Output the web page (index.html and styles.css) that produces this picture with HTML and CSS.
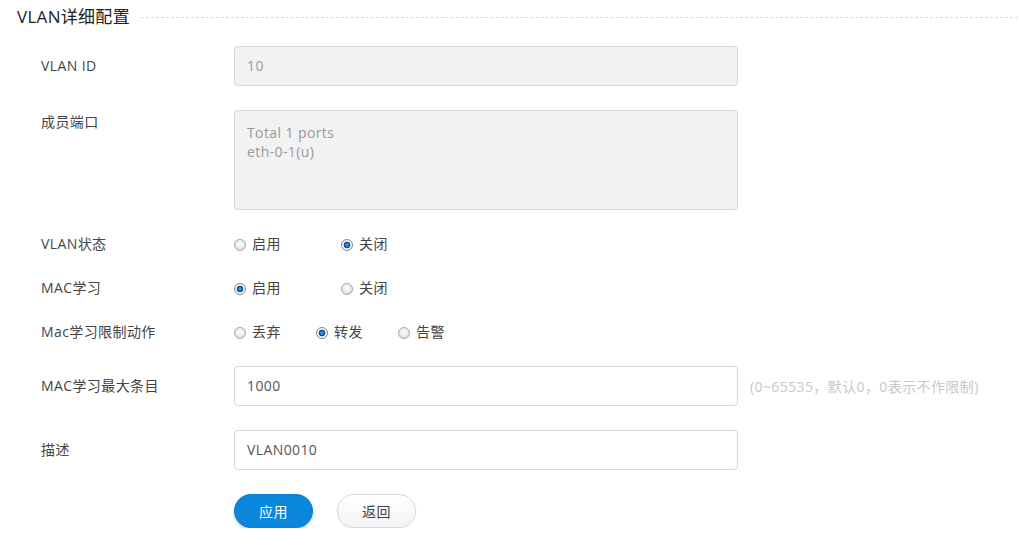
FILE: index.html
```html
<!DOCTYPE html>
<html lang="zh-CN">
<head>
<meta charset="utf-8">
<title>VLAN详细配置</title>
<link rel="stylesheet" href="styles.css">
</head>
<body>
<div class="page">
  <div class="title-bar">
    <span class="title">VLAN详细配置</span>
    <span class="title-line"></span>
  </div>
  <div class="form">
    <div class="row">
      <div class="label">VLAN ID</div>
      <div class="field input disabled">10</div>
    </div>
    <div class="row top">
      <div class="label">成员端口</div>
      <div class="field textarea disabled">Total 1 ports<br>eth-0-1(u)</div>
    </div>
    <div class="row radio-row">
      <div class="label">VLAN状态</div>
      <div class="radios wide">
        <label class="opt"><span class="radio"></span>启用</label>
        <label class="opt"><span class="radio on"></span>关闭</label>
      </div>
    </div>
    <div class="row radio-row">
      <div class="label">MAC学习</div>
      <div class="radios wide">
        <label class="opt"><span class="radio on"></span>启用</label>
        <label class="opt"><span class="radio"></span>关闭</label>
      </div>
    </div>
    <div class="row radio-row">
      <div class="label">Mac学习限制动作</div>
      <div class="radios narrow">
        <label class="opt"><span class="radio"></span>丢弃</label>
        <label class="opt"><span class="radio on"></span>转发</label>
        <label class="opt"><span class="radio"></span>告警</label>
      </div>
    </div>
    <div class="row">
      <div class="label">MAC学习最大条目</div>
      <div class="field input">1000</div>
      <div class="hint">(0~65535，默认0，0表示不作限制)</div>
    </div>
    <div class="row">
      <div class="label">描述</div>
      <div class="field input">VLAN0010</div>
    </div>
    <div class="row buttons">
      <div class="label"></div>
      <button class="btn primary">应用</button>
      <button class="btn secondary">返回</button>
    </div>
  </div>
</div>
</body>
</html>
```
FILE: styles.css
```css
html, body {
  margin: 0;
  padding: 0;
  background: #fff;
}
body {
  font-family: "Open Sans", "Noto Sans CJK SC", sans-serif;
  font-size: 14px;
  letter-spacing: 0.4px;
  color: #444;
}
.page {
  padding: 0 1px 0 17px;
}
.title-bar {
  display: flex;
  align-items: center;
  height: 34px;
}
.title {
  font-size: 17px;
  letter-spacing: 0.3px;
  color: #222;
  line-height: 34px;
  white-space: nowrap;
}
.title-line {
  flex: 1;
  margin-left: 11px;
  border-top: 1px dashed #dcdcdc;
  margin-top: 1px;
}
.form {
  padding: 12px 0 0 24px;
  display: flex;
  flex-direction: column;
  gap: 24px;
}
.row {
  display: flex;
  align-items: center;
}
.row.top {
  align-items: flex-start;
}
.label {
  width: 193px;
  flex: none;
  line-height: 24px;
  color: #444;
}
.radio-row {
  height: 20px;
}
.field {
  width: 504px;
  box-sizing: border-box;
  border: 1px solid #d6d6d6;
  border-radius: 4px;
  padding: 0 12px;
  color: #555;
  background: #fff;
}
.input {
  height: 40px;
  line-height: 38px;
}
.textarea {
  height: 100px;
  padding-top: 12px;
  line-height: 19px;
}
.disabled {
  background: #f2f2f2;
  color: #999;
}
.hint {
  margin-left: 12px;
  color: #c8c8c8;
  white-space: nowrap;
}
.radios {
  display: flex;
  align-items: center;
}
.opt {
  display: flex;
  align-items: center;
  line-height: 20px;
  color: #444;
}
.radios.wide .opt { width: 107px; }
.radios.narrow .opt { width: 82px; }
.radio {
  width: 10px;
  height: 10px;
  border: 1px solid #a8a8a8;
  border-radius: 50%;
  margin-right: 6px;
  margin-top: 2px;
  background: radial-gradient(circle at 50% 40%, #ffffff 0%, #eeeeee 45%, #cfcfcf 100%);
  box-sizing: content-box;
}
.radio.on {
  border-color: #8a8a8a;
  background: radial-gradient(circle at 50% 50%, #5aa6e6 0%, #1168b5 30%, #0d3f73 45%, #ffffff 52%, #e8e8e8 75%, #c6c6c6 100%);
}
.buttons {
  align-items: center;
}
.btn {
  width: 79px;
  height: 34px;
  border-radius: 17px;
  font-family: "Open Sans", "Noto Sans CJK SC", sans-serif;
  font-size: 14px;
  letter-spacing: 0.4px;
  padding: 0;
  cursor: pointer;
}
.primary {
  background: #0a86da;
  border: 1px solid #0a7fce;
  color: #fff;
  box-shadow: 0 2px 3px rgba(0, 80, 160, 0.25);
}
.secondary {
  margin-left: 24px;
  background: linear-gradient(#ffffff, #f3f3f3);
  border: 1px solid #d8d8d8;
  color: #444;
  box-shadow: 0 1px 2px rgba(0, 0, 0, 0.06);
}
```
